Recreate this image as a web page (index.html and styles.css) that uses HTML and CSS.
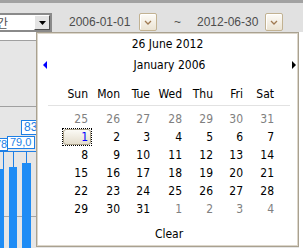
FILE: index.html
```html
<!DOCTYPE html>
<html lang="ko">
<head>
<meta charset="utf-8">
<link rel="stylesheet" href="styles.css">
</head>
<body>
<div class="topline"></div>
<div class="toolbar">
  <div class="select">
    <span class="select-text">기간</span>
    <span class="select-btn"><svg width="7" height="4" viewBox="0 0 7 4"><path d="M0 0h7L3.5 4z" fill="#000"/></svg></span>
  </div>
  <span class="date date-from">2006-01-01</span>
  <span class="cal-btn btn-from"><svg width="8" height="5" viewBox="0 0 8 5"><path d="M1 1L4 4L7 1" stroke="#a07a52" stroke-width="1.3" fill="none"/></svg></span>
  <span class="tilde">~</span>
  <span class="date date-to">2012-06-30</span>
  <span class="cal-btn btn-to"><svg width="8" height="5" viewBox="0 0 8 5"><path d="M1 1L4 4L7 1" stroke="#a07a52" stroke-width="1.3" fill="none"/></svg></span>
</div>
<div class="content">
  <div class="main">
    <div class="blank"></div>
    <div class="band"></div>
    <div class="chart">
      <div class="gridline"></div>
      <div class="connector"></div>
      <div class="tick tick-1"></div>
      <div class="tick tick-2"></div>
      <div class="tick tick-3"></div>
      <div class="bar bar-1"></div>
      <div class="bar bar-2"></div>
      <div class="bar bar-3"></div>
      <div class="label label-78">78</div>
      <div class="label label-79">79,0</div>
      <div class="label label-83">83</div>
    </div>
  </div>
</div>

<div class="popup">
  <div class="cal-title">26 June 2012</div>
  <div class="cal-nav">
    <span class="arrow arrow-left"></span>
    <span class="cal-month">January 2006</span>
    <span class="arrow arrow-right"></span>
  </div>
  <div class="cal-head">
    <span>Sun</span><span>Mon</span><span>Tue</span><span>Wed</span><span>Thu</span><span>Fri</span><span>Sat</span>
  </div>
  <div class="cal-days">
    <span class="other">25</span><span class="other">26</span><span class="other">27</span><span class="other">28</span><span class="other">29</span><span class="other">30</span><span class="other">31</span>
    <span class="selected"><span class="num">1</span></span><span>2</span><span>3</span><span>4</span><span>5</span><span>6</span><span>7</span>
    <span>8</span><span>9</span><span>10</span><span>11</span><span>12</span><span>13</span><span>14</span>
    <span>15</span><span>16</span><span>17</span><span>18</span><span>19</span><span>20</span><span>21</span>
    <span>22</span><span>23</span><span>24</span><span>25</span><span>26</span><span>27</span><span>28</span>
    <span>29</span><span>30</span><span>31</span><span class="other">1</span><span class="other">2</span><span class="other">3</span><span class="other">4</span>
  </div>
  <div class="cal-clear">Clear</div>
</div>
</body>
</html>
```

FILE: styles.css
```css
html, body {
  margin: 0;
  padding: 0;
}
body {
  width: 303px;
  height: 248px;
  overflow: hidden;
  background: #fff;
  position: relative;
  font-family: "Liberation Sans", "Noto Sans CJK KR", sans-serif;
}

.topline {
  height: 3px;
  background: #a2a2a2;
}

.toolbar {
  height: 29px;
  box-sizing: border-box;
  padding-top: 10px;
  background: #e1e1e1;
  display: flex;
  align-items: flex-start;
}

.select {
  margin-left: -22px;
  width: 74px;
  height: 19px;
  box-sizing: border-box;
  border: 2px solid #8a8a8a;
  background: #fff;
  display: flex;
  align-items: stretch;
}
.select-text {
  flex: 1;
  padding-left: 6px;
  font: 12px/15px "Noto Sans CJK KR", sans-serif;
  color: #555;
  white-space: nowrap;
  overflow: hidden;
}
.select-btn {
  width: 16px;
  box-sizing: border-box;
  background: #e4e4e4;
  border: 1px solid;
  border-color: #fff #505050 #505050 #fff;
  display: flex;
  align-items: center;
  justify-content: center;
}

.date {
  width: 60px;
  font-size: 12px;
  line-height: 19px;
  color: #4d4d4d;
  white-space: nowrap;
}
.date-from { margin-left: 17px; }
.date-to { margin-left: 16px; }

.cal-btn {
  width: 18px;
  height: 18px;
  box-sizing: border-box;
  border: 1px solid #c2b292;
  border-radius: 2px;
  background: linear-gradient(#fdfbf7, #ebe3d3);
  box-shadow: inset 1px 1px 0 #fff;
  display: flex;
  align-items: center;
  justify-content: center;
}
.btn-from { margin-left: 10px; }
.btn-to { margin-left: 8px; }

.tilde {
  margin-left: 17px;
  width: 7px;
  font-size: 12px;
  line-height: 19px;
  color: #4d4d4d;
}

.content {
  display: flex;
  height: 216px;
  padding-right: 4px;
  background: #fff;
}
.main {
  flex: 1;
  display: flex;
  flex-direction: column;
}
.blank {
  height: 8px;
  background: #fff;
}
.band {
  height: 65px;
  background: #e6e6e6;
  border-top: 1px solid #a0a0a0;
  border-bottom: 1px solid #a0a0a0;
}
.chart {
  position: relative;
  flex: 1;
  background: #e6e6e6;
  overflow: hidden;
}
.gridline {
  position: absolute;
  left: 0;
  right: 0;
  top: 109px;
  height: 1px;
  background: #a6a6a6;
}
.bar {
  position: absolute;
  bottom: 0;
  background: #1e8cf5;
}
.bar-1 { left: -4px; width: 8px; top: 62px; }
.bar-2 { left: 9px; width: 8px; top: 60px; }
.bar-3 { left: 22px; width: 9px; top: 56px; }

.connector {
  position: absolute;
  left: 0;
  width: 40px;
  top: 44px;
  height: 1px;
  background: #1e7fe6;
}
.tick {
  position: absolute;
  width: 1px;
  top: 44px;
  background: #1e7fe6;
}
.tick-1 { left: 3px; height: 18px; }
.tick-2 { left: 13px; height: 16px; }
.tick-3 { left: 26px; height: 12px; }

.label {
  position: absolute;
  height: 13px;
  box-sizing: border-box;
  border: 1px solid #1e7fe6;
  background: #fff;
  color: #1e7fe6;
  font: 11px/11px "Liberation Sans", sans-serif;
  padding-left: 2px;
  overflow: hidden;
  white-space: nowrap;
}
.label-78 { left: -8px; top: 31px; width: 16px; }
.label-79 { left: 7px; top: 29px; width: 28px; }
.label-83 { left: 21px; top: 13px; width: 30px; height: 15px; line-height: 13px; font-size: 12px; }

.popup {
  position: absolute;
  left: 36px;
  top: 32px;
  width: 263px;
  height: 215px;
  box-sizing: border-box;
  padding: 1px;
  border: 1px solid #a9a190;
  box-shadow: inset 0 0 0 1px #dcd6ca;
  background: #fff;
  font-family: "DejaVu Sans Condensed", "DejaVu Sans", sans-serif;
  font-size: 12px;
  color: #000;
}
.cal-title {
  height: 20px;
  line-height: 20px;
  text-align: center;
}
.cal-nav {
  height: 22px;
  display: flex;
  align-items: center;
  padding: 0 1px 0 5px;
}
.cal-month {
  flex: 1;
  text-align: center;
}
.arrow {
  width: 0;
  height: 0;
  border-style: solid;
}
.arrow-left {
  border-width: 4px 4px 4px 0;
  border-color: transparent #0000ff transparent transparent;
}
.arrow-right {
  border-width: 4px 0 4px 4px;
  border-color: transparent transparent transparent #000;
}

.cal-head,
.cal-days {
  display: grid;
  grid-template-columns: 30px 32px 30px 32px 31px 30px 31px;
  line-height: 18px;
}
.cal-head {
  margin: 9px 7px 0 10px;
  padding: 0 0 2px 14px;
  border-bottom: 1px solid #e2e2e2;
}
.cal-days {
  margin: 4px 0 0 24px;
  grid-auto-rows: 18px;
}
.cal-head span,
.cal-days > span {
  text-align: right;
  padding-right: 4px;
}
.cal-days .other {
  color: #808080;
}
.cal-days .selected {
  position: relative;
  outline: 1px dotted #000;
  outline-offset: -1px;
  color: #0000ff;
}
.cal-days .selected::before {
  content: "";
  position: absolute;
  left: 1px;
  right: 1px;
  top: 1px;
  bottom: 1px;
  border: 1px solid #a89f88;
  border-radius: 3px;
  background: linear-gradient(#fbfaf5, #e4ddcc);
}
.cal-days .selected .num {
  position: relative;
}
.cal-clear {
  margin-top: 8px;
  line-height: 16px;
  text-align: center;
  padding-left: 3px;
}
```
